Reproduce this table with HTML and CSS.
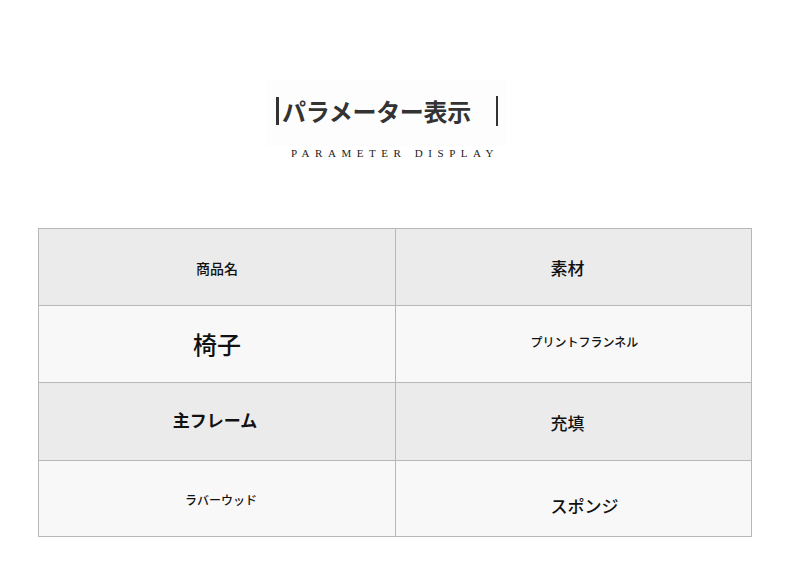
FILE: index.html
```html
<!DOCTYPE html>
<html lang="ja">
<head>
<meta charset="utf-8">
<link rel="stylesheet" href="styles.css">
</head>
<body>
<div class="page">
  <header class="head">
    <div class="title-box">
      <h1 class="title"><span class="bar-l"></span>パラメーター表示<span class="bar-r"></span></h1>
    </div>
    <div class="subtitle">PARAMETER DISPLAY</div>
  </header>
  <div class="table">
    <div class="cell hd"><span class="t-a">商品名</span></div>
    <div class="cell hd right"><span class="t-b sh-l">素材</span></div>
    <div class="cell bd"><span class="t-c">椅子</span></div>
    <div class="cell bd right"><span class="t-d sh-r">プリントフランネル</span></div>
    <div class="cell hd"><span class="t-e">主フレーム</span></div>
    <div class="cell hd right"><span class="t-b sh-l">充填</span></div>
    <div class="cell bd"><span class="t-f">ラバーウッド</span></div>
    <div class="cell bd right"><span class="t-g sh-r">スポンジ</span></div>
  </div>
</div>
</body>
</html>
```
FILE: styles.css
```css
* { box-sizing: border-box; margin: 0; padding: 0; }
html, body { background: #fff; }
body {
  width: 790px;
  height: 569px;
  font-family: "Noto Sans CJK JP", "Noto Sans", sans-serif;
  color: #111;
}
.page { padding-top: 80px; }
.head {
  display: flex;
  flex-direction: column;
  align-items: center;
}
.title-box {
  display: flex;
  justify-content: center;
  width: 240px;
  margin-right: 16px;
  height: 66px;
  background: #fdfdfd;
  padding-top: 13px;
}
.title {
  display: flex;
  align-items: center;
  font-size: 24px;
  font-weight: 700;
  color: #333;
  line-height: 36px;
  letter-spacing: -0.3px;
  height: 36px;
}
.bar-l {
  display: inline-block;
  width: 3px;
  height: 28px;
  background: #333;
  margin-right: 3px;
}
.bar-r {
  display: inline-block;
  width: 2px;
  height: 30px;
  background: #333;
  margin-left: 25px;
}
.subtitle {
  margin-top: 0;
  margin-left: 0;
  font-family: "Liberation Serif", serif;
  font-size: 11px;
  letter-spacing: 5.55px;
  color: #222;
  line-height: 14px;
}
.table {
  margin: 68px 0 0 38px;
  width: 714px;
  display: grid;
  grid-template-columns: 1fr 1fr;
  grid-template-rows: 77px 77px 78px 75px;
  border: 1px solid #b8b8b8;
}
.cell {
  display: flex;
  align-items: center;
  justify-content: center;
  border-bottom: 1px solid #b8b8b8;
}
.cell:nth-last-child(-n+2) { border-bottom: none; }
.right { border-left: 1px solid #b8b8b8; }
.hd { background: #ebebeb; }
.bd { background: #f8f8f8; }
.t-a { font-size: 14px; font-weight: 500; padding-top: 2px; }
.t-b { font-size: 17px; font-weight: 500; padding-top: 1px; }
.t-c { font-size: 24px; font-weight: 500; padding-top: 0; margin-top: -2px; }
.t-d { font-size: 12px; font-weight: 500; margin-top: -6px; }
.t-e { font-size: 17px; font-weight: 700; margin-top: -4px; margin-left: -4px; }
.t-f { font-size: 12px; font-weight: 500; padding-top: 2px; margin-left: 8px; }
.t-g { font-size: 17px; font-weight: 500; padding-top: 13px; }
.sh-l { margin-left: -12px; }
.sh-r { margin-left: 22px; }
```
